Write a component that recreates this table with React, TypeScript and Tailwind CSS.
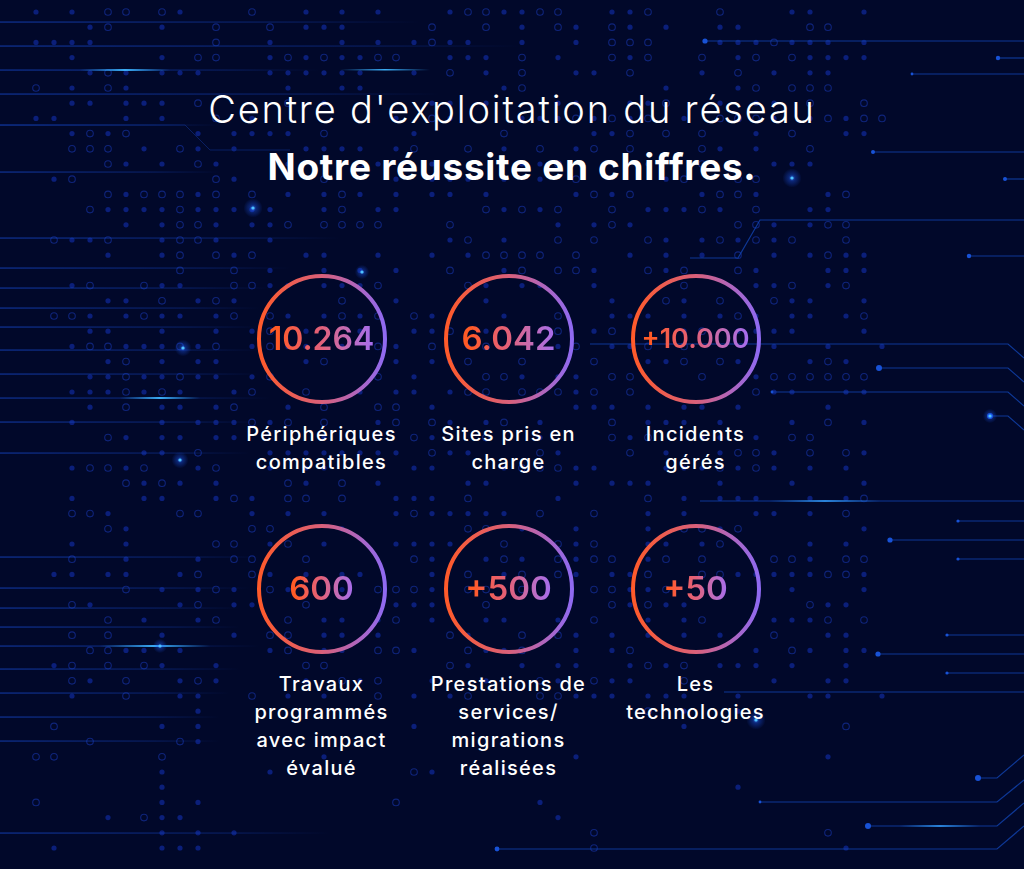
import React from "react";

type Stat = { value: string; size: string; label: string[] };

const stats: Stat[] = [
  { value: "10.264", size: "text-[32px]", label: ["Périphériques", "compatibles"] },
  { value: "6.042", size: "text-[33px]", label: ["Sites pris en", "charge"] },
  { value: "+10.000", size: "text-[27px]", label: ["Incidents", "gérés"] },
  { value: "600", size: "text-[33px]", label: ["Travaux", "programmés", "avec impact", "évalué"] },
  { value: "+500", size: "text-[33px]", label: ["Prestations de", "services/", "migrations", "réalisées"] },
  { value: "+50", size: "text-[33px]", label: ["Les", "technologies"] },
];

// left-side fading lines: [y, length]
const leftLines: [number, number][] = [
  [22, 420], [46, 520], [70, 320], [94, 440], [125, 220], [172, 220], [238, 340],
  [268, 290], [288, 270], [308, 260], [327, 260], [350, 260], [374, 260], [398, 270],
  [422, 260], [453, 250], [557, 260], [588, 250], [608, 240], [627, 240], [646, 260],
  [669, 240], [693, 230], [717, 220], [741, 220], [833, 330],
];

// right-side traces: points + start dot radius
const traces: { pts: [number, number][]; r: number }[] = [
  { pts: [[705, 41], [1024, 41]], r: 2.6 },
  { pts: [[998, 58], [1024, 58]], r: 2.2 },
  { pts: [[912, 74], [1024, 74]], r: 1.4 },
  { pts: [[873, 152], [1024, 152]], r: 2 },
  { pts: [[1005, 179], [1024, 179]], r: 2 },
  { pts: [[969, 256], [1024, 256]], r: 2.2 },
  { pts: [[690, 258], [738, 258], [760, 220], [1024, 220]], r: 0 },
  { pts: [[590, 344], [1008, 344], [1024, 358]], r: 0 },
  { pts: [[879, 368], [1008, 368], [1024, 382]], r: 3 },
  { pts: [[772, 392], [1008, 392], [1024, 406]], r: 1.4 },
  { pts: [[990, 416], [1008, 416], [1024, 430]], r: 3 },
  { pts: [[700, 501], [1024, 501]], r: 0 },
  { pts: [[958, 521], [1024, 521]], r: 1.6 },
  { pts: [[890, 540], [1024, 540]], r: 2.6 },
  { pts: [[958, 559], [1024, 559]], r: 1.6 },
  { pts: [[947, 635], [1024, 635]], r: 1.6 },
  { pts: [[878, 654], [1024, 654]], r: 2.6 },
  { pts: [[947, 673], [1024, 673]], r: 1.6 },
  { pts: [[724, 692], [1024, 692]], r: 0 },
  { pts: [[978, 778], [997, 778], [1024, 755]], r: 3 },
  { pts: [[760, 802], [997, 802], [1024, 780]], r: 1.4 },
  { pts: [[868, 826], [997, 826], [1024, 803]], r: 3 },
  { pts: [[497, 849], [997, 849], [1024, 826]], r: 2.4 },
];

const glows: [number, number, number][] = [
  [253, 208, 4], [792, 178, 4], [183, 348, 3.5], [180, 460, 3.5], [756, 720, 4],
  [362, 272, 3], [160, 646, 3], [990, 416, 3],
];

function rand(i: number, j: number) {
  const v = Math.sin(i * 12.9898 + j * 78.233) * 43758.5453;
  return v - Math.floor(v);
}

const dots: { x: number; y: number; kind: number; bright: boolean }[] = [];
for (let i = 0; i < 48; i++) {
  for (let j = 0; j < 56; j++) {
    const x = 36 + i * 18;
    const y = 12 + j * 15.2;
    let density = 0.52;
    if (y > 700) density = x > 160 && x < 200 ? 0.5 : 0.06;
    if (x > 880) density = 0.02;
    if (x < 60) density = 0.15;
    const r = rand(i, j);
    if (r > density) continue;
    const k = rand(j + 3, i + 7);
    dots.push({ x, y, kind: k < 0.62 ? 0 : 1, bright: k > 0.93 });
  }
}

function Background() {
  return (
    <svg className="absolute inset-0 h-full w-full" viewBox="0 0 1024 869" preserveAspectRatio="none">
      <defs>
        <linearGradient id="fadeR" x1="0" y1="0" x2="1" y2="0">
          <stop offset="0" stopColor="#1546c8" stopOpacity="0.75" />
          <stop offset="0.7" stopColor="#1546c8" stopOpacity="0.35" />
          <stop offset="1" stopColor="#1546c8" stopOpacity="0" />
        </linearGradient>
        <linearGradient id="streak" x1="0" y1="0" x2="1" y2="0">
          <stop offset="0" stopColor="#2fa8ff" stopOpacity="0" />
          <stop offset="0.5" stopColor="#3fb6ff" stopOpacity="0.95" />
          <stop offset="1" stopColor="#2fa8ff" stopOpacity="0" />
        </linearGradient>
        <radialGradient id="glow">
          <stop offset="0" stopColor="#3d8bff" stopOpacity="0.8" />
          <stop offset="0.35" stopColor="#1f5cff" stopOpacity="0.35" />
          <stop offset="1" stopColor="#1f5cff" stopOpacity="0" />
        </radialGradient>
      </defs>

      {dots.map((d, n) =>
        d.kind === 0 ? (
          <circle key={n} cx={d.x} cy={d.y} r={2.6} fill={d.bright ? "#1535bb" : "#0b1f7a"} />
        ) : (
          <circle key={n} cx={d.x} cy={d.y} r={3.3} fill="none" stroke="#0f247a" strokeWidth={1.1} />
        )
      )}

      {leftLines.map(([y, len], n) => (
        <rect key={n} x={0} y={y - 0.5} width={len} height={1.1} fill="url(#fadeR)" />
      ))}
      <rect x={80} y={69} width={90} height={2} fill="url(#streak)" />
      <rect x={120} y={397} width={80} height={2} fill="url(#streak)" />
      <rect x={100} y={645} width={110} height={2} fill="url(#streak)" />
      <rect x={340} y={69} width={90} height={1.5} fill="url(#streak)" />
      <rect x={770} y={500} width={110} height={2} fill="url(#streak)" />
      <rect x={900} y={825} width={80} height={2} fill="url(#streak)" />

      {traces.map((t, n) => (
        <g key={n}>
          <polyline
            points={t.pts.map((p) => p.join(",")).join(" ")}
            fill="none"
            stroke="#1243b0"
            strokeOpacity={0.8}
            strokeWidth={1.2}
          />
          {t.r > 0 && <circle cx={t.pts[0][0]} cy={t.pts[0][1]} r={t.r} fill="#1852d6" />}
        </g>
      ))}
      <path d="M0 125 L185 125 L210 150 L290 150" fill="none" stroke="#0f2f8a" strokeOpacity={0.6} />

      {glows.map(([x, y, r], n) => (
        <g key={n}>
          <circle cx={x} cy={y} r={r * 2.4} fill="url(#glow)" />
          <circle cx={x} cy={y} r={1.6} fill="#4fc3ff" />
        </g>
      ))}
    </svg>
  );
}

function Ring() {
  return (
    <svg className="absolute inset-0" width="130" height="130" viewBox="0 0 130 130">
      <defs>
        <linearGradient id="ring" x1="0" y1="0" x2="1" y2="0">
          <stop offset="0" stopColor="#ff5a2a" />
          <stop offset="0.5" stopColor="#d9607a" />
          <stop offset="1" stopColor="#8f6af2" />
        </linearGradient>
      </defs>
      <circle cx="65" cy="65" r="63" fill="none" stroke="url(#ring)" strokeWidth="4" />
    </svg>
  );
}

function StatItem({ stat }: { stat: Stat }) {
  return (
    <div className="flex flex-col items-center">
      <div className="relative flex h-[130px] w-[130px] items-center justify-center">
        <Ring />
        <span
          className={`relative bg-gradient-to-r from-[#ff5a26] from-10% via-[#e2607a] to-[#a46cf0] bg-clip-text font-semibold text-transparent ${stat.size}`}
        >
          {stat.value}
        </span>
      </div>
      <p className="mt-[16px] text-center text-[20px] font-medium leading-[28px] tracking-[1.3px] text-white">
        {stat.label.map((l, i) => (
          <span key={i} className="block">
            {l}
          </span>
        ))}
      </p>
    </div>
  );
}

export default function App() {
  return (
    <main className="relative h-[869px] w-full overflow-hidden bg-[#01082a] font-['Inter',sans-serif]">
      <Background />
      <div className="relative flex flex-col items-center pt-[86px]">
        <h1 className="text-[38px] font-light leading-[46px] tracking-[1.8px] text-white">
          Centre d'exploitation du réseau
        </h1>
        <h2 className="mt-[12px] text-[37px] font-bold leading-[46px] tracking-[0.7px] text-white">
          Notre réussite en chiffres.
        </h2>
        <div className="mr-[7px] mt-[84px] grid w-[561px] grid-cols-3 gap-y-[48px]">
          {stats.map((s) => (
            <StatItem key={s.value} stat={s} />
          ))}
        </div>
      </div>
    </main>
  );
}
